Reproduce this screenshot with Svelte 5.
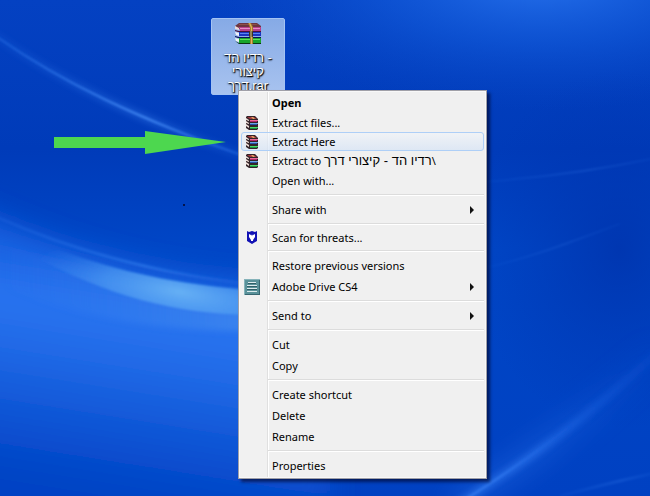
<script>
  const groups = [
    [
      { label: "Open", bold: true },
      { label: "Extract files...", icon: "rar" },
      { label: "Extract Here", icon: "rar", active: true },
      { label: "Extract to ", folder: "רדיו הד - קיצורי דרך", icon: "rar" },
      { label: "Open with..." },
    ],
    [{ label: "Share with", submenu: true }],
    [{ label: "Scan for threats...", icon: "shield" }],
    [
      { label: "Restore previous versions" },
      { label: "Adobe Drive CS4", icon: "drive", submenu: true },
    ],
    [{ label: "Send to", submenu: true }],
    [{ label: "Cut" }, { label: "Copy" }],
    [{ label: "Create shortcut" }, { label: "Delete" }, { label: "Rename" }],
    [{ label: "Properties" }],
  ];

  function isCompact(item) {
    return item.icon === "rar" || item.icon === "shield";
  }
</script>

<main class="desktop">
  <svg
    class="wallpaper"
    viewBox="0 0 650 496"
    preserveAspectRatio="none"
    aria-hidden="true"
  >
    <defs>
      <linearGradient id="base" x1="0" y1="0" x2="0" y2="1">
        <stop offset="0" stop-color="#0441c2" />
        <stop offset="0.3" stop-color="#003bb9" />
        <stop offset="0.5" stop-color="#0046c6" />
        <stop offset="1" stop-color="#0041c2" />
      </linearGradient>
      <radialGradient id="top">
        <stop offset="0" stop-color="#2873ee" stop-opacity="0.95" />
        <stop offset="0.5" stop-color="#1560e0" stop-opacity="0.5" />
        <stop offset="1" stop-color="#0a4ccc" stop-opacity="0" />
      </radialGradient>
      <linearGradient
        id="sea"
        gradientUnits="userSpaceOnUse"
        x1="80"
        y1="230"
        x2="40"
        y2="480"
      >
        <stop offset="0" stop-color="#1057d8" />
        <stop offset="0.3" stop-color="#2a74f0" />
        <stop offset="0.5" stop-color="#2069e6" />
        <stop offset="0.8" stop-color="#0b51d2" />
        <stop offset="1" stop-color="#0043c4" />
      </linearGradient>
      <radialGradient id="glow">
        <stop offset="0" stop-color="#66b0f4" />
        <stop offset="0.5" stop-color="#4e9bf2" stop-opacity="0.7" />
        <stop offset="1" stop-color="#3a84ee" stop-opacity="0" />
      </radialGradient>
      <radialGradient id="dark">
        <stop offset="0" stop-color="#0030a8" stop-opacity="0.7" />
        <stop offset="1" stop-color="#0034b0" stop-opacity="0" />
      </radialGradient>
      <linearGradient id="streak">
        <stop offset="0" stop-color="#2a74ea" stop-opacity="0.5" />
        <stop offset="0.6" stop-color="#4b92fa" />
        <stop offset="1" stop-color="#2a74ea" stop-opacity="0.5" />
      </linearGradient>
      <linearGradient id="ray">
        <stop offset="0" stop-color="#3f88fa" />
        <stop offset="0.4" stop-color="#3a82f8" />
        <stop offset="1" stop-color="#0f56da" stop-opacity="0.4" />
      </linearGradient>
      <linearGradient id="veil">
        <stop offset="0" stop-color="#3a84f2" stop-opacity="0" />
        <stop offset="1" stop-color="#4a92f0" />
      </linearGradient>
      <filter id="soft"><feGaussianBlur stdDeviation="1" /></filter>
      <filter id="medium"><feGaussianBlur stdDeviation="3" /></filter>
      <filter id="softer" x="-20%" y="-20%" width="140%" height="140%">
        <feGaussianBlur stdDeviation="14" />
      </filter>
      <clipPath id="band">
        <path d="M0 225C80 262 150 282 250 290V315C170 313 100 296 0 238Z" />
      </clipPath>
    </defs>
    <rect width="650" height="496" fill="url(#base)" />
    <ellipse cx="540" cy="-20" rx="330" ry="130" fill="url(#top)" />
    <ellipse cx="620" cy="250" rx="150" ry="180" fill="url(#dark)" />
    <path
      d="M-60 190C50 250 150 276 250 282H330V550H-60Z"
      fill="url(#sea)"
      filter="url(#softer)"
    />
    <path
      d="M0 240C80 276 150 290 260 294V331C170 332 90 322 0 286Z"
      fill="url(#veil)"
      opacity="0.6"
      filter="url(#medium)"
    />
    <g filter="url(#soft)">
      <g clip-path="url(#band)">
        <ellipse
          cx="180"
          cy="292"
          rx="150"
          ry="46"
          fill="url(#glow)"
          transform="rotate(10 180 292)"
        />
      </g>
    </g>
    <g fill="none" stroke="url(#streak)">
      <path d="M-10 32C60 82 140 120 250 158" stroke-width="8" opacity="0.3" filter="url(#medium)" />
      <path d="M-10 32C60 82 140 120 250 158" stroke-width="2" opacity="0.8" filter="url(#soft)" />
      <path d="M-10 214C60 246 145 272 250 284" stroke-width="3" opacity="0.4" filter="url(#soft)" />
      <path d="M480 182C540 178 600 170 660 157" stroke-width="2" opacity="0.2" filter="url(#soft)" />
      <path d="M480 269C540 256 590 234 620 224" stroke-width="2" opacity="0.15" filter="url(#soft)" />
      <path d="M560 496C590 488 620 480 660 472" stroke-width="3" opacity="0.2" filter="url(#soft)" />
    </g>
    <g fill="none" stroke="url(#ray)">
      <path d="M455 506C530 460 590 415 660 350" stroke-width="16" opacity="0.4" filter="url(#softer)" />
      <path d="M455 506C530 460 590 415 660 350" stroke-width="7" opacity="0.5" filter="url(#medium)" />
      <path d="M455 506C490 484 530 458 570 426" stroke-width="2" opacity="0.6" filter="url(#soft)" />
    </g>
  </svg>

  <button class="shortcut">
    <svg width="28" height="22" viewBox="0 0 28 22" aria-hidden="true">
      <path d="M1 3L5 0H23L27 3V6H4Z" fill="#6d3540" />
      <path d="M5 1H22L24 2H5Z" fill="#8d5048" />
      <path d="M1 3L5 5V7L1 6Z" fill="#ead9d8" />
      <path d="M5 4H27V8H6Z" fill="#b8408c" />
      <path d="M6 5H26V6H6Z" fill="#ea8cc6" />
      <path d="M1 7L5 8H27V9H4L1 8Z" fill="#4c1038" />
      <path d="M5 9H27V13H5Z" fill="#1a35c0" />
      <path d="M6 10H26V11H6Z" fill="#5a86f0" />
      <path d="M1 9L5 10V13L2 12Z" fill="#f1f1f6" />
      <path d="M1 13L5 14H27V15H4L1 14Z" fill="#0a1358" />
      <path d="M5 15H27V20H5Z" fill="#18a52c" />
      <path d="M6 16H26V17H6Z" fill="#62e05c" />
      <path d="M1 15L5 16V19L2 18Z" fill="#f1f6ef" />
      <path d="M1 18L5 20H27V21H5Z" fill="#0c3513" />
      <path d="M14 0H17L19 4V21H16V5Z" fill="#a8792c" />
      <path d="M15 0H16L18 4V21H17V5Z" fill="#dbb860" />
      <rect x="15" y="8" width="4" height="6" rx="1" fill="#3e3420" />
      <path d="M17 8V14" stroke="#e2d49b" />
    </svg>
    <span>רדיו הד -<br />קיצורי<br />דרך.rar</span>
  </button>

  <svg class="arrow" width="172" height="24" viewBox="0 0 172 24" aria-hidden="true">
    <path d="M0 6H91V0L172 11L91 23V17H0Z" fill="#4dd74f" />
  </svg>
  <i class="speck"></i>

  <div class="menu" role="menu">
    {#each groups as group}
      <div class="group" role="group">
        {#each group as item}
          <button
            class="item"
            class:compact={isCompact(item)}
            class:active={item.active}
            class:bold={item.bold}
            role="menuitem"
          >
            <span class="icon">
              {#if item.icon === "rar"}
                <svg width="14" height="14" viewBox="0 0 14 14" aria-hidden="true">
                  <path d="M1 1L2 0H10L13 3V13L12 14H4L1 12Z" fill="#33242a" />
                  <path d="M2 1H9L12 3H5Z" fill="#a3363e" />
                  <path d="M6 1H8L10 3H8Z" fill="#e0a860" />
                  <path d="M5 4H13V5H5Z" fill="#e86a98" />
                  <path d="M5 5H12V6H5Z" fill="#b02465" />
                  <path d="M5 7H13V8H5Z" fill="#6aa6e4" />
                  <path d="M5 8H12V9H5Z" fill="#2450a8" />
                  <path d="M5 11H13V12H5Z" fill="#48dc68" />
                  <path d="M5 12H12V13H5Z" fill="#189040" />
                  <path
                    d="M1 2L4 4V5L1 4ZM1 5L4 7V8L1 7ZM1 8L4 10V12L1 10Z"
                    fill="#f0dfd8"
                  />
                </svg>
              {:else if item.icon === "shield"}
                <svg width="12" height="14" viewBox="0 0 12 14" aria-hidden="true">
                  <path d="M1 0L3 1L6 0L9 1L11 0V10L6 13L1 10Z" fill="#1212b4" />
                  <path d="M3 3L5 4L6 3L7 4L9 3V6L7 9V10H5V9L3 6Z" fill="#fff" />
                  <path d="M5 3H7L6 5Z" fill="#1212b4" />
                </svg>
              {:else if item.icon === "drive"}
                <svg width="16" height="16" viewBox="0 0 16 16" aria-hidden="true">
                  <rect width="16" height="16" fill="#5a929a" />
                  <path d="M0 0H16V1H1V16H0Z" fill="#86b3ba" />
                  <path d="M16 1V16H1V15H15V1Z" fill="#376771" />
                  <path d="M4 3H12V4H4ZM3 6H13V7H3ZM3 9H13V10H3ZM3 12H13V13H3Z" fill="#dcebed" />
                  <path d="M4 4H12V5H4ZM3 7H13V8H3ZM3 10H13V11H3Z" fill="#2f5f68" />
                </svg>
              {/if}
            </span>
            <span class="label"
              >{item.label}{#if item.folder}<span class="folder">{item.folder}</span
                >\{/if}</span
            >
            {#if item.submenu}
              <svg width="4" height="8" viewBox="0 0 4 8" aria-hidden="true">
                <path d="M0 0L4 4L0 8Z" fill="#111" />
              </svg>
            {/if}
          </button>
        {/each}
      </div>
    {/each}
  </div>
</main>

<style>
  :global(body) {
    margin: 0;
  }

  .desktop {
    position: relative;
    min-height: 100vh;
    overflow: hidden;
    background: #0043c4;
    font-family: "Noto Sans", "Open Sans", sans-serif;
    font-size: 11px;
  }

  .desktop svg {
    display: block;
    flex: none;
  }

  .wallpaper {
    position: absolute;
    width: 100%;
    height: 100%;
  }

  button {
    margin: 0;
    padding: 0;
    border: 0;
    background: none;
    font: inherit;
    color: inherit;
  }

  .shortcut {
    position: absolute;
    left: 211px;
    top: 18px;
    box-sizing: border-box;
    width: 74px;
    height: 77px;
    padding-top: 4px;
    display: flex;
    flex-direction: column;
    align-items: center;
    gap: 6px;
    border: 1px solid #a4c3f3;
    border-radius: 2px;
    background: linear-gradient(#86aae6, #a8c3ef);
    color: #fff;
    font-family: "Liberation Sans", sans-serif;
    font-size: 13px;
    line-height: 14px;
    text-shadow:
      1px 1px 1px #000,
      0 1px 2px #000;
  }

  .arrow {
    position: absolute;
    left: 54px;
    top: 131px;
  }

  .speck {
    position: absolute;
    left: 183px;
    top: 204px;
    width: 2px;
    height: 2px;
    background: #04144c;
  }

  .menu {
    position: absolute;
    left: 238px;
    top: 90px;
    box-sizing: border-box;
    min-width: 249px;
    padding: 1px 2px 2px;
    border: 1px solid #a0a0a8;
    background: linear-gradient(
      90deg,
      #f1f1f1 28px,
      #e0e0e0 28px,
      #e0e0e0 29px,
      #fff 29px,
      #fff 30px,
      #f0f0f0 30px
    );
    box-shadow:
      inset 0 0 0 1px #f8f8f8,
      3px 3px 3px rgba(0, 0, 30, 0.6);
    color: #000;
  }

  .group + .group::before {
    content: "";
    display: block;
    height: 1px;
    margin: 3px 0 3px 27px;
    border-top: 1px solid #dcdcdc;
    background: #fff;
  }

  .item {
    box-sizing: border-box;
    display: flex;
    align-items: center;
    width: 100%;
    height: 21px;
    padding-right: 9px;
    border: 1px solid transparent;
    border-radius: 3px;
    line-height: 16px;
    text-align: left;
  }

  .compact {
    height: 19px;
  }

  .active {
    border-color: #aecff7;
    background: linear-gradient(rgba(240, 244, 250, 0.6), rgba(214, 228, 246, 0.7));
  }

  .bold {
    font-weight: 700;
  }

  .icon {
    flex: none;
    display: flex;
    justify-content: center;
    width: 20px;
    margin-right: 10px;
  }

  .label {
    flex: 1;
    white-space: nowrap;
  }

  .folder {
    font-family: "Liberation Sans", sans-serif;
    font-size: 13px;
  }
</style>
